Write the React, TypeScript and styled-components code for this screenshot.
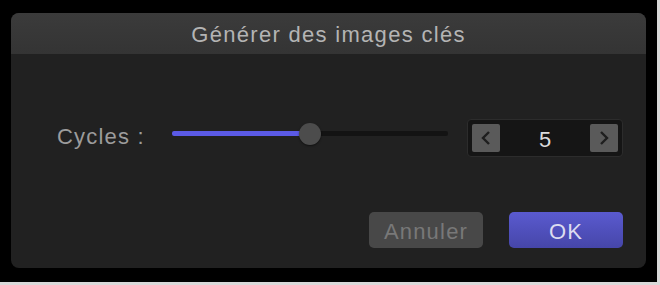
import React, { useState } from 'react';
import styled, { createGlobalStyle } from 'styled-components';

const GlobalStyle = createGlobalStyle`
  html, body {
    margin: 0;
    padding: 0;
    background: #d9d9d9;
  }
  body {
    font-family: "Liberation Sans", Arial, sans-serif;
  }
`;

const Backdrop = styled.div({
  background: '#000',
  boxSizing: 'border-box',
  height: 282,
  padding: '13px 0 0 11px',
  width: 657,
});

const Dialog = styled.div({
  background: '#212121',
  borderRadius: 8,
  display: 'flex',
  flexDirection: 'column',
  height: 255,
  overflow: 'hidden',
  width: 635,
});

const TitleBar = styled.div({
  alignItems: 'center',
  background: 'linear-gradient(#3b3b3b, #343434)',
  boxSizing: 'border-box',
  color: '#b4b4b4',
  display: 'flex',
  fontSize: 22,
  height: 41,
  justifyContent: 'center',
  letterSpacing: 1.3,
  paddingTop: 3,
});

const Body = styled.div({
  display: 'flex',
  flex: 1,
  flexDirection: 'column',
  padding: '65px 23px 20px 46px',
});

const Row = styled.div({
  alignItems: 'center',
  display: 'flex',
});

const Label = styled.div({
  color: '#9c9c9c',
  fontSize: 22,
  letterSpacing: 1.2,
  paddingBottom: 2,
  width: 115,
});

const Slider = styled.div({
  alignItems: 'center',
  display: 'flex',
  height: 22,
  marginBottom: 9,
  position: 'relative',
  width: 276,
});

const Track = styled.div({
  background: '#131313',
  borderRadius: 2,
  height: 5,
  width: '100%',
});

const Fill = styled.div({
  background: '#5b5ae6',
  borderRadius: 2,
  height: '100%',
});

const Thumb = styled.div({
  background: '#4c4c4c',
  borderRadius: '50%',
  boxShadow: '0 1px 2px rgba(0,0,0,0.5)',
  height: 22,
  position: 'absolute',
  top: 0,
  transform: 'translateX(-50%)',
  width: 22,
});

const Stepper = styled.div({
  alignItems: 'center',
  background: '#151515',
  border: '1px solid #2c2c2c',
  borderRadius: 4,
  boxSizing: 'border-box',
  display: 'flex',
  height: 38,
  justifyContent: 'space-between',
  marginLeft: 19,
  padding: '0 4px',
  width: 156,
});

const StepButton = styled.button({
  alignItems: 'center',
  background: '#5a5a5a',
  border: 'none',
  borderRadius: 2,
  display: 'flex',
  height: 28,
  justifyContent: 'center',
  padding: 0,
  width: 28,
});

const Value = styled.div({
  color: '#dcdcdc',
  fontSize: 22,
  paddingTop: 4,
});

const Footer = styled.div({
  display: 'flex',
  gap: 26,
  justifyContent: 'flex-end',
  marginTop: 'auto',
});

const Button = styled.button<{ $primary?: boolean }>(({ $primary }) => ({
  background: $primary ? 'linear-gradient(#5a5acf, #4646a9)' : '#484848',
  border: 'none',
  borderRadius: 5,
  color: $primary ? '#dcdcf0' : '#787878',
  fontFamily: '"Liberation Sans", Arial, sans-serif',
  fontSize: 22,
  height: 36,
  letterSpacing: 1.2,
  padding: '3px 0 0',
  width: 114,
}));

const Chevron = ({ dir }: { dir: 'left' | 'right' }) => (
  <svg width="14" height="18" viewBox="0 0 14 18">
    <path
      d={dir === 'left' ? 'M10 3 L4 9 L10 15' : 'M4 3 L10 9 L4 15'}
      fill="none"
      stroke="#1e1e1e"
      strokeWidth="2.4"
    />
  </svg>
);

const App = () => {
  const [cycles, setCycles] = useState(5);
  const pct = 50;

  return (
    <>
      <GlobalStyle />
      <Backdrop>
        <Dialog>
          <TitleBar>Générer des images clés</TitleBar>
          <Body>
            <Row>
              <Label>Cycles :</Label>
              <Slider>
                <Track>
                  <Fill style={{ width: `${pct}%` }} />
                </Track>
                <Thumb style={{ left: `${pct}%` }} />
              </Slider>
              <Stepper>
                <StepButton onClick={() => setCycles(c => Math.max(1, c - 1))}>
                  <Chevron dir="left" />
                </StepButton>
                <Value>{cycles}</Value>
                <StepButton onClick={() => setCycles(c => c + 1)}>
                  <Chevron dir="right" />
                </StepButton>
              </Stepper>
            </Row>
            <Footer>
              <Button>Annuler</Button>
              <Button $primary>OK</Button>
            </Footer>
          </Body>
        </Dialog>
      </Backdrop>
    </>
  );
};

export default App;
